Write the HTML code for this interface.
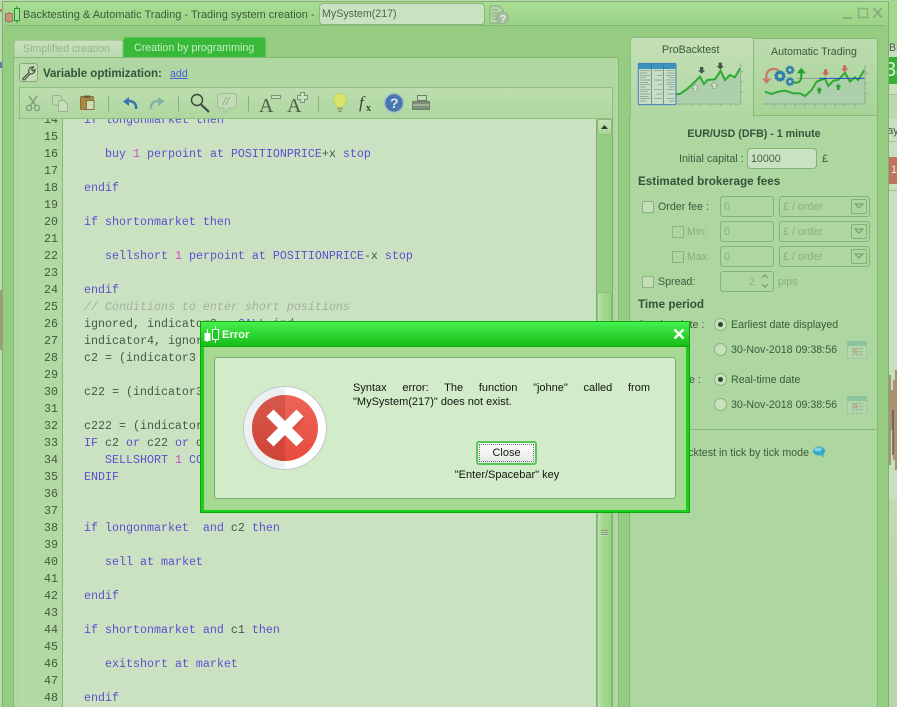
<!DOCTYPE html>
<html><head><meta charset="utf-8">
<style>
html,body{margin:0;padding:0;width:897px;height:707px;overflow:hidden;background:#bcd8ae;font-family:"Liberation Sans",sans-serif;font-size:10.67px;color:#3c5a3c}
div{box-sizing:border-box}
#root{position:absolute;left:0;top:0;width:897px;height:707px;overflow:hidden}
.a{position:absolute}
.t{position:absolute;white-space:nowrap;height:14px;line-height:14px;margin-top:1px}
.b{font-weight:bold;color:#36523a}
.inp{position:absolute;border:1px solid #82b474;border-radius:3px;height:21px;line-height:20px;padding-left:3px;color:#86b07c;white-space:nowrap}
.cb{position:absolute;width:12px;height:12px;border:1px solid #8ab47e;background:#c4dfb8}
.cb.d{background:#aed6a0}
.arrow{position:absolute;left:71px;top:2px;width:16px;height:15px;border:1px solid #82b474;border-radius:2px}
.rad{position:absolute;width:13px;height:13px;border-radius:50%;border:1px solid #8ab47e;background:#c8e2bc}
.rad.on:after{content:"";position:absolute;left:3px;top:3px;width:5px;height:5px;border-radius:50%;background:#2c4a30}
.sep{position:absolute;top:96px;width:1px;height:16px;background:#86b478}
pre{margin:0;font-family:"Liberation Mono",monospace;font-size:11.67px;line-height:17px;color:#445a44}
i{font-style:normal;color:#5a50cf}
u{text-decoration:none;color:#d24cc4}
em{font-style:italic;color:#9fb39b}
</style></head><body>
<div id="root">

<!-- outside fragments -->
<div class="a" style="left:0;top:0;width:3px;height:707px;background:#bcd8ae"></div>
<div class="a" style="left:0;top:290px;width:2px;height:60px;background:#a09878"></div>
<div class="a" style="left:0;top:9px;width:2px;height:3px;background:#c08070"></div>
<div class="a" style="left:0;top:62px;width:2px;height:6px;background:#6078b0"></div>
<div class="a" style="left:889px;top:0;width:8px;height:707px;background:#c8e0c0"></div>
<div class="a" style="left:889px;top:0;width:8px;height:44px;background:#a5d690"></div>
<div class="t" style="left:889px;top:40px;color:#3c5a3c;width:8px;overflow:hidden">Bu</div>
<div class="a" style="left:889px;top:57px;width:8px;height:27px;background:#38b038;color:#d8f4d0;font-size:20px;line-height:27px;overflow:hidden;text-indent:-4px">34</div>
<div class="a" style="left:889px;top:94px;width:8px;height:25px;background:#bcd8ae;border-top:1px solid #9cc48c"></div>
<div class="t" style="left:889px;top:123px;width:8px;overflow:hidden;text-indent:-4px">lay</div>
<div class="a" style="left:889px;top:141px;width:8px;height:1px;background:#9cc48c"></div>
<div class="a" style="left:889px;top:157px;width:8px;height:27px;background:#c07460;color:#eee;line-height:27px;overflow:hidden;padding-left:2px">1</div>
<div class="a" style="left:889px;top:190px;width:8px;height:1px;background:#9cc48c"></div>
<svg class="a" style="left:889px;top:370px" width="8" height="100"><path d="M1 5V95M3 20V60M5 10V90M7 0V100" stroke="#a87c60" stroke-width="1.6" fill="none"/><path d="M4 40V85" stroke="#58684a" stroke-width="1.5"/></svg>
<div class="a" style="left:889px;top:500px;width:8px;height:207px;background:linear-gradient(#c0dab2,#b8d6aa)"></div>

<!-- window -->
<div class="a" style="left:2px;top:1px;width:887px;height:720px;background:#96cc82;border:1px solid #7fb070"></div>
<div class="a" style="left:3px;top:2px;width:885px;height:24px;background:linear-gradient(#a9de94,#9ad288)"></div>
<div class="a" style="left:5px;top:25px;width:880px;height:1px;background:#7fb872"></div>

<svg class="a" style="left:4px;top:5px" width="18" height="18"><path d="M5 7V19" stroke="#a07060"/><rect x="1.5" y="8.5" width="7" height="8" fill="#c49880" stroke="#a07060"/><rect x="10.5" y="3.5" width="5" height="12" fill="#a8dc94" stroke="#209a30"/><path d="M13 1V3.5M13 15.5V18" stroke="#209a30"/></svg>
<div class="t" style="left:23px;top:7px;font-size:11px">Backtesting &amp; Automatic Trading - Trading system creation</div>
<div class="t" style="left:311px;top:7px;font-size:11px">-</div>
<div class="a" style="left:319px;top:3px;width:166px;height:22px;background:#cbe2c2;border:1px solid #86b87a;border-radius:4px;line-height:21px;padding-left:2px;color:#4c684c">MySystem(217)</div>
<svg class="a" style="left:489px;top:5px" width="21" height="20"><path d="M1 1H10L14 5V18H1Z" fill="#b6d8a8" stroke="#8aa884"/><path d="M3 5H9M3 8H10M3 11H8M3 14H8" stroke="#8aa884"/><circle cx="13.500" cy="13" r="6" fill="#a6bea0" stroke="#98b090"/><text x="11" y="17" font-size="10" font-weight="bold" fill="#eef6ea" font-family="Liberation Sans">?</text></svg>
<svg class="a" style="left:840px;top:5px" width="46" height="16"><path d="M3 13H12" stroke="#8aae80" stroke-width="2"/><rect x="18.500" y="3.500" width="9" height="9" fill="none" stroke="#8aae80" stroke-width="1.500"/><path d="M33.500 3L42 12.500M42 3L33.500 12.500" stroke="#8aae80" stroke-width="2"/></svg>

<!-- left tabs -->
<div class="a" style="left:14px;top:40px;width:109px;height:18px;background:linear-gradient(#cbe2c0,#b8d8aa);border:1px solid #a8cc9c;border-bottom:0;border-radius:3px 3px 0 0"></div>
<div class="t" style="left:23px;top:41px;color:#93b78b">Simplified creation</div>
<div class="a" style="left:123px;top:37px;width:143px;height:21px;background:#39b93a;border:1px solid #5cc058;border-bottom:0;border-radius:3px 3px 0 0"></div>
<div class="t" style="left:134px;top:40px;color:#c6eec2">Creation by programming</div>

<!-- left panel -->
<div class="a" style="left:13px;top:57px;width:606px;height:660px;background:#b0d7a2;border:1px solid #84ba76"></div>
<div class="a" style="left:19px;top:63px;width:19px;height:19px;background:#c0ddb2;border:1px solid #88a880;border-radius:3px"></div>
<svg class="a" style="left:19px;top:63px" width="19" height="19"><path d="M4 15.500L10 9.500C9 6.500 11 3.500 14.500 4L12.500 6.500L14 8L16 6.500C16 10 13 11.500 11 10.800L6 16.500C5 17.500 3 16.500 4 15.500Z" fill="none" stroke="#3c4c3c" stroke-width="1.100"/></svg>
<div class="t b" style="left:43px;top:66px;font-size:11.5px">Variable optimization:</div>
<div class="t" style="left:170px;top:66px;color:#4c62da;text-decoration:underline">add</div>

<!-- toolbar -->
<div class="a" style="left:19px;top:87px;width:594px;height:32px;background:linear-gradient(#bcdeae,#b0d7a0);border:1px solid #8cc07e"></div>
<svg class="a" style="left:0;top:0;pointer-events:none" width="640" height="120">
 <g fill="none" stroke="#7c9878" stroke-width="1.300"><path d="M29 96L36 106M37 96L30 106"/><circle cx="29" cy="108" r="2.600"/><circle cx="37" cy="108" r="2.600"/></g>
 <path d="M52.500 95.500H60L62 98V105H52.500Z" fill="#bcdcae" stroke="#9ab492"/><path d="M58.500 100.500H64L67.500 104V111.500H58.500Z" fill="#c6e0ba" stroke="#9ab492"/>
 <rect x="80.500" y="96.500" width="13" height="13" rx="1" fill="#a88a48" stroke="#8a7038"/><path d="M84 95.500H90V98H84Z" fill="#6a6040"/><path d="M86.500 100.500H94V109.500H86.500Z" fill="#c8ddb8" stroke="#8a7038"/>
 <path d="M136 109C137 102 131 100 125 101.500" fill="none" stroke="#3a72b4" stroke-width="2.500"/><path d="M123 101.500L129 97V106Z" fill="#3a72b4"/>
 <path d="M151 109C150 102 156 100 162 101.500" fill="none" stroke="#84b4a8" stroke-width="2.500"/><path d="M165 101.500L158 97V106Z" fill="#84b4a8"/>
 <circle cx="197" cy="100" r="5.500" fill="none" stroke="#3a463a" stroke-width="1.400"/><path d="M201 104.500L209 112" stroke="#3a463a" stroke-width="2"/>
 <path d="M221 93.500H233C236 93.500 236.500 95 236.500 98V104C236.500 107 235 108 232 108H229L224 113V108H221C218 108 217.500 107 217.500 104V98C217.500 95 218 93.500 221 93.500Z" fill="#c2dcb6" stroke="#a2bc9a"/><text x="223" y="105" font-size="11" font-style="italic" fill="#8aa484" font-family="Liberation Sans">//</text>
 <text x="259" y="112" font-size="20" fill="#4c5c4c" font-family="Liberation Serif">A</text><rect x="271.500" y="95.500" width="9" height="3" fill="#c8e0bc" stroke="#7c9478"/>
 <text x="287" y="112" font-size="20" fill="#4c5c4c" font-family="Liberation Serif">A</text><path d="M300.500 92.500H304.500V95.500H307.500V99.500H304.500V102.500H300.500V99.500H297.500V95.500H300.500Z" fill="#c8e0bc" stroke="#7c9478"/>
 <path d="M340 93.500C344 93.500 346.500 96 346.500 99.500C346.500 102.500 343.500 104 343.500 107H336.500C336.500 104 333.500 102.500 333.500 99.500C333.500 96 336 93.500 340 93.500Z" fill="#d8e66e" stroke="#c4d060"/><path d="M337 108.500H343M338 111H342" stroke="#8c9c6c" stroke-width="1.500"/>
 <text x="359" y="108" font-size="17" font-style="italic" fill="#3c463c" font-family="Liberation Serif">f</text><text x="366" y="111" font-size="10" font-weight="bold" fill="#3c463c" font-family="Liberation Serif">x</text>
 <circle cx="394" cy="103" r="9.500" fill="#4878b0" stroke="#a8c0c4" stroke-width="1.500"/><text x="390" y="108" font-size="14" font-weight="bold" fill="#dceaf0" font-family="Liberation Sans">?</text>
 <rect x="417.500" y="95.500" width="9" height="5" fill="#c2dab8" stroke="#6c8068"/><path d="M412.500 101.500H429.500V109.500H412.500Z" fill="#808e7c" stroke="#6c8068"/><path d="M413 105H429" stroke="#c4d4bc"/>
</svg>
<div class="sep" style="left:108px"></div><div class="sep" style="left:178px"></div><div class="sep" style="left:248px"></div><div class="sep" style="left:318px"></div>

<!-- editor -->
<div class="a" style="left:20px;top:119px;width:43px;height:600px;background:#b2d8a4;border-right:1px solid #86ba78"></div>
<div class="a" style="left:63px;top:119px;width:533px;height:600px;background:#cbe2c2"></div>
<div class="a" style="left:20px;top:119px;width:38px;height:588px;overflow:hidden">
<pre style="text-align:right;margin-top:-7px;color:#445a38">14
15
16
17
18
19
20
21
22
23
24
25
26
27
28
29
30
31
32
33
34
35
36
37
38
39
40
41
42
43
44
45
46
47
48</pre></div>
<div class="a" style="left:63px;top:119px;width:533px;height:588px;overflow:hidden">
<pre style="position:absolute;left:21px;top:-7px"><i>if longonmarket then</i>

   <i>buy</i> <u>1</u> <i>perpoint at POSITIONPRICE</i>+x <i>stop</i>

<i>endif</i>

<i>if shortonmarket then</i>

   <i>sellshort</i> <u>1</u> <i>perpoint at POSITIONPRICE</i>-x <i>stop</i>

<i>endif</i>
<em>// Conditions to enter short positions</em>
ignored, indicator3 = <i>CALL</i> ind
indicator4, ignored = <i>CALL</i> ind
c2 = (indicator3 &gt; indicator4)

c22 = (indicator3 &gt; indicator4)

c222 = (indicator3 &gt; indicator4)
<i>IF</i> c2 <i>or</i> c22 <i>or</i> c222 <i>THEN</i>
   <i>SELLSHORT</i> <u>1</u> <i>CONTRACT AT MARKET</i>
<i>ENDIF</i>


<i>if longonmarket  and</i> c2 <i>then</i>

   <i>sell at market</i>

<i>endif</i>

<i>if shortonmarket and</i> c1 <i>then</i>

   <i>exitshort at market</i>

<i>endif</i></pre></div>

<!-- scrollbar -->
<div class="a" style="left:596px;top:119px;width:17px;height:600px;background:#96cc84;border-left:1px solid #80b072;border-right:1px solid #80b072"></div>
<div class="a" style="left:597px;top:119px;width:15px;height:16px;background:linear-gradient(#c4e2b6,#aad89a);border:1px solid #8cbc7e;border-radius:3px"></div>
<svg class="a" style="left:597px;top:119px" width="15" height="16"><path d="M4 10H11L7.500 6Z" fill="#2c4030"/></svg>
<div class="a" style="left:597px;top:292px;width:15px;height:440px;background:linear-gradient(90deg,#bce2ac,#a2d690 40%,#9ad088);border:1px solid #8cbc7e;border-radius:3px"></div>
<div class="a" style="left:601px;top:530px;width:7px;height:6px;background:repeating-linear-gradient(#7c9c74 0 1px,#c0dcb4 1px 2px)"></div>

<!-- right panel -->
<div class="a" style="left:629px;top:115px;width:249px;height:610px;background:#aed6a0;border:1px solid #84ba76;border-top:0"></div>
<div class="a" style="left:630px;top:37px;width:124px;height:80px;background:linear-gradient(#c4e0b6,#b0d8a2);border:1px solid #8cc07e;border-bottom:0;border-radius:3px 3px 0 0"></div>
<div class="a" style="left:753px;top:38px;width:125px;height:78px;background:linear-gradient(#bcdcae,#a8d498);border:1px solid #84ba76;border-radius:0 3px 0 0"></div>
<div class="t" style="left:662px;top:42px;color:#3c583c">ProBacktest</div>
<div class="t" style="left:771px;top:44px;color:#3c583c">Automatic Trading</div>

<svg class="a" style="left:0;top:0;pointer-events:none" width="897" height="125">
<g transform="translate(450,0) scale(.3333)">
 <path d="M678 282L690 282L710 268L725 255L750 230L762 252L772 240L795 238L812 212L825 240L840 225L855 232L870 205V308H678Z" fill="#aecfab"/>
 <path d="M678 282L690 282L710 268L725 255L750 230L762 252L772 240L795 238L812 212L825 240L840 225L855 232L870 205" fill="none" stroke="#2eaa32" stroke-width="6"/>
 <path d="M872 190V312H678" fill="none" stroke="#8cae90" stroke-width="3"/>
 <path d="M690 312V318M724 312V318M752 312V318M782 312V318M812 312V318M842 312V318M872 215H880M872 245H880M872 275H880" stroke="#8cae90" stroke-width="3"/>
 <path d="M750 201H760V212H766L755 221L744 212H750Z" fill="#465646"/><path d="M806 188H816V198H822L811 208L800 198H806Z" fill="#465646"/>
 <path d="M731 275V265H725L736 254L747 265H741V275Z" fill="#cfe4c8" stroke="#8aa088" stroke-width="2"/><path d="M788 266V257H782L793 246L804 257H798V266Z" fill="#cfe4c8" stroke="#8aa088" stroke-width="2"/>
 <rect x="565" y="190" width="113" height="124" rx="3" fill="#c9dec4" stroke="#3f7cb8" stroke-width="3"/>
 <rect x="565" y="190" width="113" height="17" rx="3" fill="#3c92bc"/>
 <path d="M604 190V314M640 190V314" stroke="#3f6c90" stroke-width="2"/>
 <path d="M570 212H600M570 219H592M570 226H600M570 233H588M570 240H600M570 247H594M570 254H600M570 261H588M570 268H600M570 275H592M570 282H600M570 289H596M570 296H600M570 303H590M612 212H636M620 226H636M612 240H636M624 254H636M612 268H636M620 282H636M612 296H636M648 212H674M652 219H674M648 226H674M656 233H674M648 240H674M652 247H674M648 254H674M656 261H674M648 268H674M652 282H674M648 296H674M656 303H674" stroke="#7c947c" stroke-width="2"/>
 <path d="M945 275L965 282L985 275L1005 272L1030 280L1050 280L1065 288L1085 270L1100 245L1125 235L1135 258L1150 242L1165 240L1185 218L1200 245L1215 232L1225 240L1243 210V312H945Z" fill="#aecfab"/>
 <path d="M945 275L965 282L985 275L1005 272L1030 280L1050 280L1065 288L1085 270L1100 245L1125 235L1135 258L1150 242L1165 240L1185 218L1200 245L1215 232L1225 240L1243 210" fill="none" stroke="#2eaa32" stroke-width="6"/>
 <path d="M1245 195V312H938" fill="none" stroke="#8cae90" stroke-width="3"/>
 <path d="M973 312V320M1005 312V320M1035 312V320M1065 312V320M1095 312V320M1125 312V320M1155 312V320M1185 312V320M1215 312V320M1245 220H1254M1245 250H1254M1245 280H1254" stroke="#8cae90" stroke-width="3"/>
 <path d="M1040 235H1107" stroke="#8a9a8a" stroke-width="3"/><path d="M1107 235H1243" stroke="#2c48c8" stroke-width="3"/>
 <path d="M1122 208H1132V218H1138L1127 228L1116 218H1122Z" fill="#c86a58"/><path d="M1179 196H1189V206H1195L1184 216L1173 206H1179Z" fill="#c86a58"/>
 <path d="M1104 280V271H1099L1108 261L1117 271H1112V280Z" fill="#22a62a"/><path d="M1161 270V261H1156L1165 251L1174 261H1169V270Z" fill="#22a62a"/>
 <path d="M985 210C960 200 945 215 950 240" fill="none" stroke="#cc7a68" stroke-width="7"/><path d="M936 235H964L950 252Z" fill="#cc7a68"/>
 <path d="M1032 248C1050 250 1056 240 1054 218" fill="none" stroke="#28a030" stroke-width="6"/><path d="M1040 220H1068L1054 203Z" fill="#28a030"/>
 <g fill="none" stroke="#2f7fa8"><circle cx="990" cy="228" r="11" stroke-width="9"/><circle cx="990" cy="228" r="16" stroke-width="3" stroke-dasharray="5 5"/><circle cx="1020" cy="210" r="8" stroke-width="7"/><circle cx="1020" cy="210" r="12" stroke-width="3" stroke-dasharray="4 4"/><circle cx="1020" cy="245" r="8" stroke-width="7"/><circle cx="1020" cy="245" r="12" stroke-width="3" stroke-dasharray="4 4"/></g>
</g>
</svg>

<div class="t b" style="left:630px;top:126px;width:248px;text-align:center">EUR/USD (DFB) - 1 minute</div>
<div class="t" style="left:679px;top:151px">Initial capital :</div>
<div class="a" style="left:747px;top:148px;width:70px;height:21px;background:#cbe2c2;border:1px solid #82b474;border-radius:4px;line-height:20px;padding-left:3px;color:#44603f">10000</div>
<div class="t" style="left:822px;top:151px">£</div>
<div class="t b" style="left:638px;top:174px;font-size:11.7px">Estimated brokerage fees</div>

<div class="cb" style="left:642px;top:201px"></div><div class="t" style="left:658px;top:199px">Order fee :</div>
<div class="inp" style="left:720px;top:196px;width:54px">0</div>
<div class="inp" style="left:779px;top:196px;width:91px">£ / order<div class="arrow"><svg width="14" height="13" style="display:block"><path d="M3 4H11L7 8Z" fill="none" stroke="#6f9a68"/></svg></div></div>
<div class="cb d" style="left:672px;top:226px"></div><div class="t" style="left:687px;top:224px;color:#86b07c">Min:</div>
<div class="inp" style="left:720px;top:221px;width:54px">0</div>
<div class="inp" style="left:779px;top:221px;width:91px">£ / order<div class="arrow"><svg width="14" height="13" style="display:block"><path d="M3 4H11L7 8Z" fill="none" stroke="#6f9a68"/></svg></div></div>
<div class="cb d" style="left:672px;top:251px"></div><div class="t" style="left:687px;top:249px;color:#86b07c">Max:</div>
<div class="inp" style="left:720px;top:246px;width:54px">0</div>
<div class="inp" style="left:779px;top:246px;width:91px">£ / order<div class="arrow"><svg width="14" height="13" style="display:block"><path d="M3 4H11L7 8Z" fill="none" stroke="#6f9a68"/></svg></div></div>
<div class="cb" style="left:642px;top:276px"></div><div class="t" style="left:658px;top:274px">Spread:</div>
<div class="inp" style="left:720px;top:271px;width:54px;padding-left:28px">2</div>
<svg class="a" style="left:760px;top:273px" width="10" height="16"><path d="M2 5L5 2L8 5M2 11L5 14L8 11" fill="none" stroke="#6f9a68"/></svg>
<div class="t" style="left:778px;top:274px;color:#86b07c">pips</div>
<div class="t b" style="left:638px;top:297px;font-size:11.7px">Time period</div>

<div class="t" style="left:638px;top:317px">Starting date :</div>
<div class="rad on" style="left:714px;top:318px"></div><div class="t" style="left:731px;top:317px">Earliest date displayed</div>
<div class="rad" style="left:714px;top:343px"></div><div class="t" style="left:731px;top:342px">30-Nov-2018 09:38:56</div>
<div class="t" style="left:638px;top:372px">Ending date :</div>
<div class="rad on" style="left:714px;top:373px"></div><div class="t" style="left:731px;top:372px">Real-time date</div>
<div class="rad" style="left:714px;top:398px"></div><div class="t" style="left:731px;top:397px">30-Nov-2018 09:38:56</div>
<svg class="a" style="left:846px;top:340px" width="22" height="20"><rect x="1.500" y="1.500" width="19" height="17" fill="#b6d8aa" stroke="#a0c8a0"/><rect x="1" y="1" width="20" height="5" fill="#8cc4a0"/><path d="M5 8.500H18M5 11.500H18M5 14.500H18M7.500 7V17M11 7V17M14.500 7V17" stroke="#9cc4a0"/><rect x="8" y="9.500" width="3" height="3" fill="none" stroke="#c89880"/></svg>
<svg class="a" style="left:846px;top:395px" width="22" height="20"><rect x="1.500" y="1.500" width="19" height="17" fill="#b6d8aa" stroke="#a0c8a0"/><rect x="1" y="1" width="20" height="5" fill="#8cc4a0"/><path d="M5 8.500H18M5 11.500H18M5 14.500H18M7.500 7V17M11 7V17M14.500 7V17" stroke="#9cc4a0"/><rect x="8" y="9.500" width="3" height="3" fill="none" stroke="#c89880"/></svg>
<div class="a" style="left:630px;top:429px;width:247px;height:1px;background:#84ba76"></div>
<div class="cb" style="left:642px;top:447px"></div>
<div class="t" style="left:658px;top:445px;width:151px;text-align:right">Backtest in tick by tick mode</div>
<svg class="a" style="left:812px;top:445px" width="14" height="14"><ellipse cx="7" cy="6" rx="6" ry="4.500" fill="#38a8c8"/><ellipse cx="6" cy="4.500" rx="4" ry="2" fill="#80d0e4"/><path d="M8 9L12 13L11 8Z" fill="#38a8c8"/></svg>

<!-- dialog -->
<div class="a" style="left:200px;top:321px;width:490px;height:192px;background:#1dcf1d;border:1px solid #0aa80a"></div>
<div class="a" style="left:201px;top:322px;width:488px;height:25px;background:linear-gradient(#46f04e,#17bd17);border-bottom:1px solid #0ea80e"></div>
<div class="a" style="left:204px;top:347px;width:482px;height:163px;background:#a6da90"></div>
<svg class="a" style="left:203px;top:326px" width="18" height="18"><path d="M4.500 3V16" stroke="#fff"/><rect x="1.500" y="7" width="6" height="8" fill="#fff"/><path d="M12.500 0V17" stroke="#fff"/><rect x="9.500" y="3.500" width="6" height="10" fill="#1ecb22" stroke="#fff"/></svg>
<div class="t" style="left:222px;top:327px;color:#f4fff0;font-weight:bold;font-size:11.2px">Error</div>
<svg class="a" style="left:672px;top:327px" width="14" height="14"><path d="M2.500 2.500L11.500 11.500M11.500 2.500L2.500 11.500" stroke="#fff" stroke-width="2.400"/></svg>
<div class="a" style="left:214px;top:357px;width:462px;height:142px;background:#d2ebc8;border:1px solid #7eaa74;border-radius:3px"></div>

<svg class="a" style="left:242px;top:385px" width="86" height="86">
 <defs>
  <linearGradient id="gr" x1="0" y1="0" x2="0" y2="1"><stop offset="0" stop-color="#ec6458"/><stop offset="1" stop-color="#e84c3c"/></linearGradient>
  <linearGradient id="gl" x1="0" y1="0" x2="0" y2="1"><stop offset="0" stop-color="#d6584c"/><stop offset="1" stop-color="#d04436"/></linearGradient>
 </defs>
 <circle cx="43" cy="43" r="41.500" fill="#fff" stroke="#c0c8c8"/>
 <path d="M43 2A41 41 0 0 0 43 84Z" fill="#edf0f1"/>
 <circle cx="43" cy="43" r="33" fill="url(#gr)"/>
 <path d="M43 10A33 33 0 0 0 43 76Z" fill="url(#gl)"/>
 <path d="M29 29L57 57M57 29L29 57" stroke="#b83c30" stroke-width="10" transform="translate(2,2)" opacity=".3"/>
 <path d="M28 28L58 58M58 28L28 58" stroke="#fff" stroke-width="10"/>
</svg>

<div class="a" style="left:353px;top:381px;width:297px;line-height:14px;color:#101810;font-size:11px;text-align:justify;text-align-last:justify">Syntax error: The function "johne" called from</div>
<div class="t" style="left:353px;top:394px;color:#101810;font-size:11px">"MySystem(217)" does not exist.</div>
<div class="a" style="left:476px;top:441px;width:61px;height:24px;border:2px solid #56c656;border-radius:3px;background:linear-gradient(#fff,#e4e8e2)"><div style="margin:1px;height:18px;border:1px dotted #707070;text-align:center;line-height:17px;color:#101810;font-size:11px">Close</div></div>
<div class="t" style="left:407px;top:467px;width:200px;text-align:center;color:#101810;font-size:11px">"Enter/Spacebar" key</div>

</div>
</body></html>
